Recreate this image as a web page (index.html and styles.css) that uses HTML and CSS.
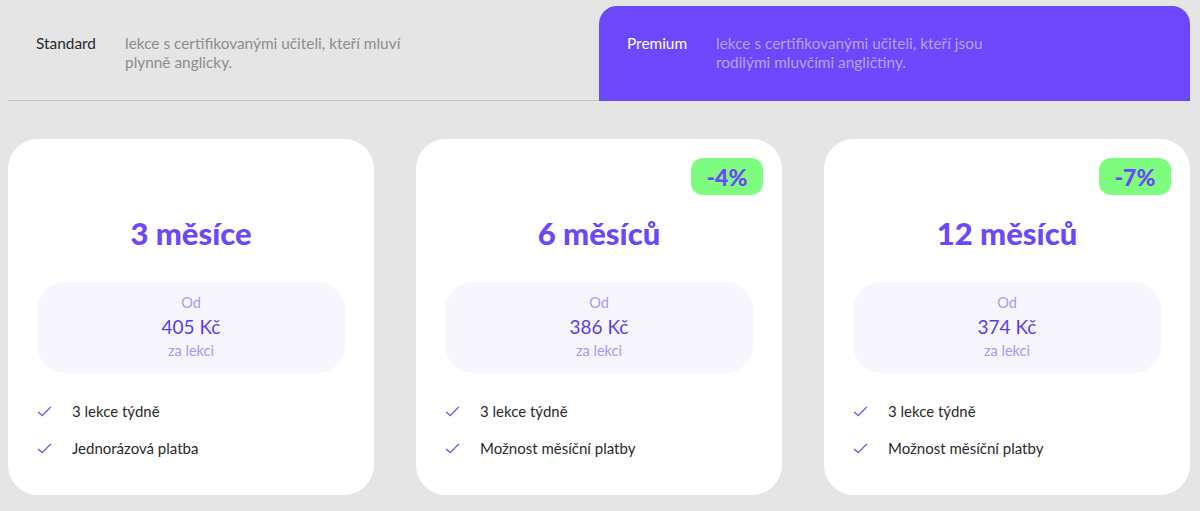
FILE: index.html
```html
<!DOCTYPE html>
<html>
<head>
	<title>Ceník lekcí</title>
	<meta charset="utf-8">
	<meta name="viewport" content="width=device-width, initial-scale=1.0">
	<link rel="stylesheet" href="styles.css">
</head>
<body>
	<div class="tabs">
		<div class="tab">
			<div class="tab-name">Standard</div>
			<div class="tab-desc">lekce s certifikovanými učiteli, kteří mluví plynně anglicky.</div>
		</div>
		<div class="tab active">
			<div class="tab-name">Premium</div>
			<div class="tab-desc">lekce s certifikovanými učiteli, kteří jsou rodilými mluvčími angličtiny.</div>
		</div>
	</div>

	<div class="cards">
		<div class="card">
			<h2 class="title">3 měsíce</h2>
			<div class="price">
				<div class="from">Od</div>
				<div class="amount">405 Kč</div>
				<div class="from">za lekci</div>
			</div>
			<ul class="features">
				<li><svg class="check" viewBox="0 0 16 12"><path d="M1 6.5l4.5 4L15 1"/></svg>3 lekce týdně</li>
				<li><svg class="check" viewBox="0 0 16 12"><path d="M1 6.5l4.5 4L15 1"/></svg>Jednorázová platba</li>
			</ul>
		</div>
		<div class="card">
			<div class="badge">-4%</div>
			<h2 class="title">6 měsíců</h2>
			<div class="price">
				<div class="from">Od</div>
				<div class="amount">386 Kč</div>
				<div class="from">za lekci</div>
			</div>
			<ul class="features">
				<li><svg class="check" viewBox="0 0 16 12"><path d="M1 6.5l4.5 4L15 1"/></svg>3 lekce týdně</li>
				<li><svg class="check" viewBox="0 0 16 12"><path d="M1 6.5l4.5 4L15 1"/></svg>Možnost měsíční platby</li>
			</ul>
		</div>
		<div class="card">
			<div class="badge">-7%</div>
			<h2 class="title">12 měsíců</h2>
			<div class="price">
				<div class="from">Od</div>
				<div class="amount">374 Kč</div>
				<div class="from">za lekci</div>
			</div>
			<ul class="features">
				<li><svg class="check" viewBox="0 0 16 12"><path d="M1 6.5l4.5 4L15 1"/></svg>3 lekce týdně</li>
				<li><svg class="check" viewBox="0 0 16 12"><path d="M1 6.5l4.5 4L15 1"/></svg>Možnost měsíční platby</li>
			</ul>
		</div>
	</div>
</body>
</html>
```

FILE: styles.css
```css
*{
	padding: 0;
	margin: 0;
	box-sizing: border-box;
}
body{
	font-family: Lato, "Noto Sans", sans-serif;
	background-color: #e5e5e5;
	padding: 6px 10px 0 8px;
}
.tabs{
	display: flex;
	border-bottom: 1px solid #c6c6c6;
}
.tab{
	width: 50%;
	display: flex;
	padding: 28px 28px;
	font-size: 15.4px;
	line-height: 19px;
	height: 94px;
}
.tab-name{
	width: 89px;
	flex-shrink: 0;
	color: #2a2a2a;
}
.tab-desc{
	width: 300px;
	color: #8d8d8d;
}
.tab.active{
	background-color: #6c47fb;
	border-radius: 18px 18px 0 0;
	margin-bottom: -1px;
	height: 95px;
}
.tab.active .tab-name{
	color: white;
}
.tab.active .tab-desc{
	color: #b4a3ff;
}

.cards{
	display: flex;
	justify-content: space-between;
	margin-top: 38px;
}
.card{
	width: 366px;
	height: 356px;
	background-color: white;
	border-radius: 30px;
	padding: 75px 29px 0;
	position: relative;
}
.badge{
	position: absolute;
	top: 19px;
	right: 19px;
	width: 72px;
	height: 37px;
	border-radius: 12px;
	background-color: #7dfc7f;
	color: #6c47fb;
	font-size: 23px;
	font-weight: 900;
	display: flex;
	align-items: center;
	justify-content: center;
}
.title{
	text-align: center;
	color: #6c47fb;
	font-size: 31px;
	font-weight: 900;
	line-height: 38px;
}
.price{
	margin-top: 30px;
	height: 91px;
	padding-top: 9px;
	border-radius: 28px;
	background-color: #f7f6ff;
	text-align: center;
	line-height: 24px;
}
.from{
	font-size: 14.5px;
	color: #a996ff;
}
.amount{
	font-size: 19px;
	color: #5b3ee6;
}
.features{
	list-style: none;
	margin-top: 27px;
	padding-left: 0;
}
.features li{
	display: flex;
	align-items: center;
	font-size: 15px;
	line-height: 22px;
	color: #2a2a2a;
	margin-bottom: 15px;
}
.check{
	width: 15px;
	height: 11px;
	margin-right: 20px;
	fill: none;
	stroke: #6c47fb;
	stroke-width: 1.4;
}
```
